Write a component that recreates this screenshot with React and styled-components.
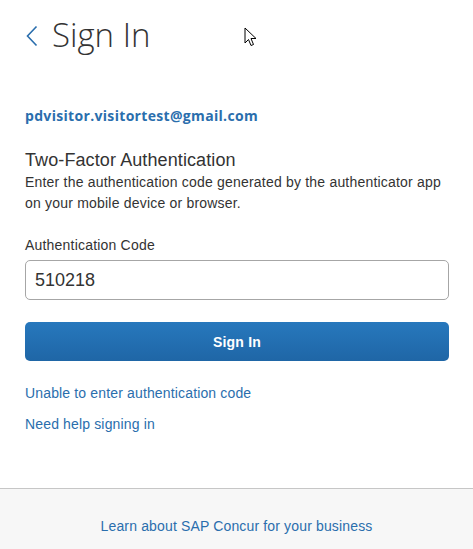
import React from "react";
import styled, { createGlobalStyle } from "styled-components";

const GlobalStyle = createGlobalStyle`
  html, body {
    margin: 0;
    padding: 0;
    background: #fff;
  }
  body {
    font-family: "Liberation Sans", Arial, sans-serif;
    color: #333;
  }
`;

function Cursor() {
  return (
    <CursorMark width="14" height="21" viewBox="0 0 14 21">
      <path
        d="M1 1 L1 16 L4.5 12.5 L7 18.5 L9.5 17.5 L7 11.5 L12 11.5 Z"
        fill="#fff"
        stroke="#000"
        strokeWidth="1"
      />
    </CursorMark>
  );
}

function App() {
  return (
    <>
      <GlobalStyle />
      <Page>
        <Main>
          <Header>
            <Back aria-label="Back">
              <svg width="12" height="22" viewBox="0 0 12 22">
                <path d="M10.5 1.5 L1.5 11 L10.5 20.5" fill="none" stroke="#2a6ead" strokeWidth="1.6" />
              </svg>
            </Back>
            <Title>Sign In</Title>
            <Cursor />
          </Header>

          <Email>pdvisitor.visitortest@gmail.com</Email>

          <Subtitle>Two-Factor Authentication</Subtitle>
          <Help>
            Enter the authentication code generated by the authenticator app
            on your mobile device or browser.
          </Help>

          <Label htmlFor="code">Authentication Code</Label>
          <Input id="code" defaultValue="510218" />

          <Button type="button">Sign In</Button>

          <Links>
            <Link href="#">Unable to enter authentication code</Link>
            <Link href="#">Need help signing in</Link>
          </Links>
        </Main>

        <Footer>
          <Link href="#">Learn about SAP Concur for your business</Link>
        </Footer>
      </Page>
    </>
  );
}

const Page = styled.div`
  width: 473px;
  min-height: 549px;
  display: flex;
  flex-direction: column;
`;

const Main = styled.div`
  display: flex;
  flex-direction: column;
  padding: 0 24px 0 25px;
  height: 488px;
  box-sizing: border-box;
`;

const Header = styled.div`
  position: relative;
  display: flex;
  align-items: center;
  height: 68px;
  gap: 14px;
  padding-left: 1px;
`;

const Back = styled.span`
  display: flex;
  margin-top: 3px;
`;

const Title = styled.h1`
  margin: 0;
  font-family: "Open Sans", sans-serif;
  font-weight: 300;
  font-size: 33px;
  color: #333;
`;

const CursorMark = styled.svg`
  position: absolute;
  left: 219px;
  top: 27px;
`;

const Email = styled.div`
  margin-top: 38px;
  font-family: "Open Sans", sans-serif;
  font-weight: 700;
  font-size: 14px;
  letter-spacing: 0.32px;
  color: #2a6ead;
  line-height: 20px;
`;

const Subtitle = styled.h2`
  margin: 23px 0 0;
  font-size: 18px;
  font-weight: 400;
  line-height: 22px;
  letter-spacing: 0.1px;
  color: #333;
`;

const Help = styled.p`
  margin: 1px 0 0;
  font-size: 14px;
  line-height: 21px;
  letter-spacing: 0.2px;
  color: #333;
`;

const Label = styled.label`
  margin-top: 21px;
  font-size: 14px;
  line-height: 20px;
  letter-spacing: 0.2px;
  color: #333;
`;

const Input = styled.input`
  margin-top: 5px;
  height: 40px;
  box-sizing: border-box;
  border: 1px solid #a6a6a6;
  border-radius: 5px;
  padding: 0 9px;
  font-family: "Liberation Sans", Arial, sans-serif;
  font-size: 18px;
  color: #333;
  outline: none;
`;

const Button = styled.button`
  margin-top: 22px;
  height: 39px;
  border: none;
  border-radius: 5px;
  background: linear-gradient(#2778bd, #1f66a6);
  color: #fff;
  font-family: "Liberation Sans", Arial, sans-serif;
  font-weight: 700;
  font-size: 14px;
  letter-spacing: 0.2px;
  cursor: pointer;
`;

const Links = styled.div`
  display: flex;
  flex-direction: column;
  gap: 10px;
  margin-top: 22px;
`;

const Link = styled.a`
  font-size: 14px;
  line-height: 21px;
  letter-spacing: 0.15px;
  color: #2a6ead;
  text-decoration: none;
`;

const Footer = styled.footer`
  flex: 1;
  display: flex;
  justify-content: center;
  padding-top: 27px;
  background: #f7f7f7;
  border-top: 1px solid #c6c6c6;
`;

export default App;
